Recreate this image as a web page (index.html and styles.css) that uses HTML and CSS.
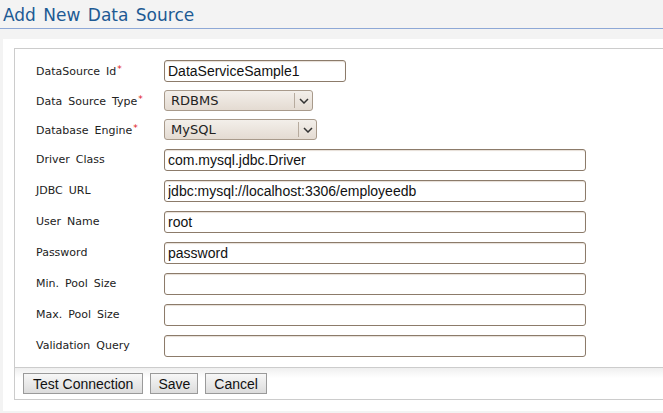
FILE: index.html
```html
<!DOCTYPE html>
<html>
<head>
<meta charset="utf-8">
<link rel="stylesheet" href="styles.css">
</head>
<body>
<h2 class="title">Add New Data Source</h2>
<div class="panel">
  <div class="form-table">
    <div class="rows">
      <div class="row">
        <label class="lbl">DataSource Id<span class="req">*</span></label>
        <input class="txt w-id" type="text" value="DataServiceSample1">
      </div>
      <div class="row row-sel">
        <label class="lbl">Data Source Type<span class="req">*</span></label>
        <div class="sel w-type"><span class="sel-text">RDBMS</span><span class="sel-arrow"><svg width="10" height="6" viewBox="0 0 10 6"><path d="M1 1 L5 5 L9 1" fill="none" stroke="#333" stroke-width="1.5"/></svg></span></div>
      </div>
      <div class="row row-sel">
        <label class="lbl">Database Engine<span class="req">*</span></label>
        <div class="sel w-engine"><span class="sel-text">MySQL</span><span class="sel-arrow"><svg width="10" height="6" viewBox="0 0 10 6"><path d="M1 1 L5 5 L9 1" fill="none" stroke="#333" stroke-width="1.5"/></svg></span></div>
      </div>
      <div class="row">
        <label class="lbl">Driver Class</label>
        <input class="txt w-long" type="text" value="com.mysql.jdbc.Driver">
      </div>
      <div class="row">
        <label class="lbl">JDBC URL</label>
        <input class="txt w-long" type="text" value="jdbc:mysql://localhost:3306/employeedb">
      </div>
      <div class="row">
        <label class="lbl">User Name</label>
        <input class="txt w-long" type="text" value="root">
      </div>
      <div class="row">
        <label class="lbl">Password</label>
        <input class="txt w-long" type="text" value="password">
      </div>
      <div class="row">
        <label class="lbl">Min. Pool Size</label>
        <input class="txt w-long" type="text" value="">
      </div>
      <div class="row">
        <label class="lbl">Max. Pool Size</label>
        <input class="txt w-long" type="text" value="">
      </div>
      <div class="row">
        <label class="lbl">Validation Query</label>
        <input class="txt w-long" type="text" value="">
      </div>
    </div>
    <div class="buttons">
      <button class="btn btn-wide">Test Connection</button>
      <button class="btn btn-narrow">Save</button>
      <button class="btn">Cancel</button>
    </div>
  </div>
</div>
</body>
</html>
```
FILE: styles.css
```css
html, body {
  margin: 0;
  padding: 0;
  background: #f3f3f3;
  overflow: hidden;
}
.title {
  margin: 0;
  padding: 5px 0 0 3px;
  height: 23px;
  font-family: "DejaVu Sans", sans-serif;
  font-weight: normal;
  font-size: 17px;
  line-height: 20px;
  word-spacing: 2px;
  color: #1d5a94;
  border-bottom: 1px solid #8ea8d6;
}
.panel {
  margin: 10px 0 0 3px;
  background: #fff;
  padding: 9px 0 11px 11px;
}
.form-table {
  border: 1px solid #cccccc;
  border-right: none;
}
.rows {
  padding: 6px 0 6px 21px;
}
.row {
  display: flex;
  align-items: center;
  height: 31px;
}
.row-sel {
  height: 29px;
}
.lbl {
  width: 128px;
  font-family: "DejaVu Sans", sans-serif;
  font-size: 11px;
  word-spacing: 2.5px;
  color: #222;
}
.req {
  color: #e0141e;
  font-size: 9px;
  vertical-align: 3px;
  margin-left: 1px;
}
.txt {
  box-sizing: border-box;
  height: 22px;
  margin: 0;
  padding: 0 3px;
  border: 1px solid #8c7b6a;
  border-radius: 3px;
  box-shadow: inset 0 1px 1px #e6ded6;
  background: #fff;
  font-family: "Liberation Sans", sans-serif;
  font-size: 14px;
  color: #111;
  outline: none;
}
.w-id { width: 182px; }
.w-long { width: 422px; }
.sel {
  box-sizing: border-box;
  display: flex;
  align-items: center;
  height: 21px;
  border: 1px solid #a89a8b;
  border-radius: 3px;
  background: linear-gradient(#f3efea, #e4dbd2);
  font-family: "DejaVu Sans", sans-serif;
  font-size: 13px;
  color: #222;
}
.w-type { width: 149px; }
.w-engine { width: 153px; }
.sel-text {
  flex: 1;
  padding-left: 6px;
}
.sel-arrow {
  width: 17px;
  height: 15px;
  border-left: 1px solid #b7ab9e;
  display: flex;
  align-items: center;
  justify-content: center;
}
.buttons {
  display: flex;
  gap: 7px;
  border-top: 1px solid #cccccc;
  background: linear-gradient(#efefef, #ffffff 10px);
  padding: 5px 8px 5px 8px;
}
.btn {
  box-sizing: border-box;
  height: 21px;
  margin: 0;
  padding: 0 8px;
  border: 1px solid #9a9a9a;
  background: linear-gradient(#f7f7f7, #dcdcdc);
  font-family: "Liberation Sans", sans-serif;
  font-size: 14px;
  color: #111;
}
.btn-wide { padding: 0 9px; }
.btn-narrow { padding: 0 7px; }
```
